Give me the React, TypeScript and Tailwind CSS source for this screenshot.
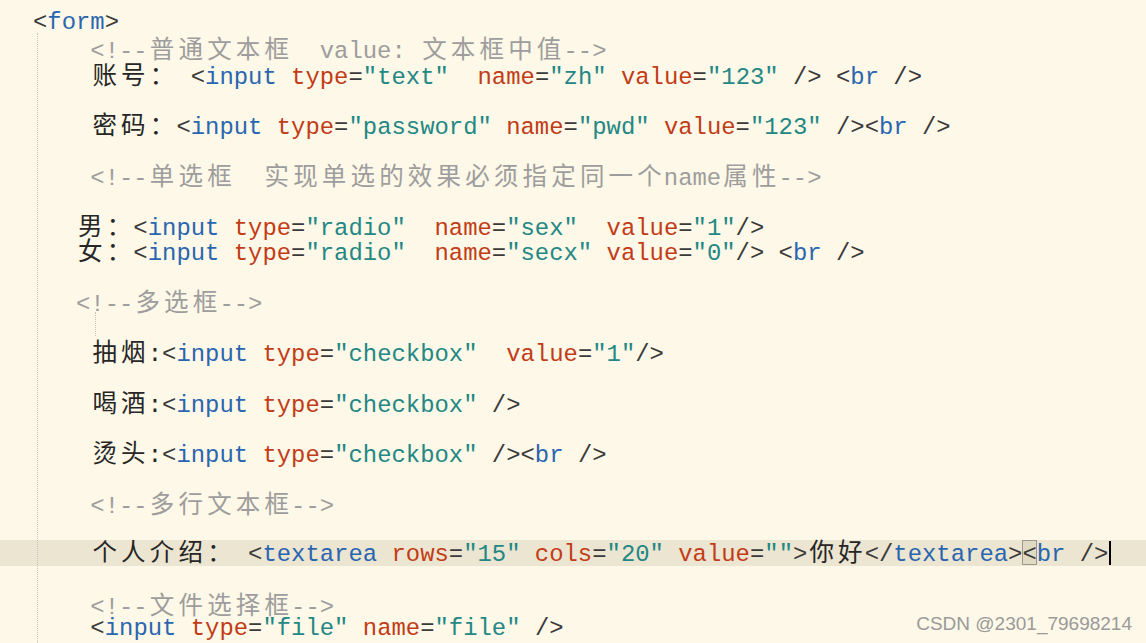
import React from "react";

type Seg = [string, string];

const D = "text-[#3a3a3a]";
const T = "text-[#2a66b0]";
const A = "text-[#c23c17]";
const V = "text-[#238784]";
const C = "text-[#9d9d9d]";
const X = "text-[#262626]";

function isWide(ch: string) {
  const c = ch.codePointAt(0) || 0;
  return c >= 0x2e80;
}

function renderText(s: string, key: string) {
  const out: React.ReactNode[] = [];
  let buf = "";
  let i = 0;
  for (const ch of s) {
    if (isWide(ch)) {
      if (buf) {
        out.push(<span key={key + "a" + i}>{buf}</span>);
        buf = "";
      }
      out.push(
        <span
          key={key + "w" + i}
          className="inline-block w-[28.68px] text-center font-['Noto_Sans_CJK_SC',sans-serif] text-[24.5px] leading-[25.25px]"
        >
          {ch}
        </span>
      );
    } else {
      buf += ch;
    }
    i++;
  }
  if (buf) out.push(<span key={key + "e"}>{buf}</span>);
  return out;
}

const attr = (name: string, val: string): Seg[] => [
  [A, name],
  [D, "="],
  [V, val],
];

const lines: Seg[][] = [
  [[D, "<"], [T, "form"], [D, ">"]],
  [[C, "    <!--普通文本框  value: 文本框中值-->"]],
  [
    [X, "    账号： "],
    [D, "<"],
    [T, "input"],
    [X, " "],
    ...attr("type", '"text"'),
    [X, "  "],
    ...attr("name", '"zh"'),
    [X, " "],
    ...attr("value", '"123"'),
    [D, " /> <"],
    [T, "br"],
    [D, " />"],
  ],
  [],
  [
    [X, "    密码："],
    [D, "<"],
    [T, "input"],
    [X, " "],
    ...attr("type", '"password"'),
    [X, " "],
    ...attr("name", '"pwd"'),
    [X, " "],
    ...attr("value", '"123"'),
    [D, " /><"],
    [T, "br"],
    [D, " />"],
  ],
  [],
  [[C, "    <!--单选框  实现单选的效果必须指定同一个name属性-->"]],
  [],
  [
    [X, "   男："],
    [D, "<"],
    [T, "input"],
    [X, " "],
    ...attr("type", '"radio"'),
    [X, "  "],
    ...attr("name", '"sex"'),
    [X, "  "],
    ...attr("value", '"1"'),
    [D, "/>"],
  ],
  [
    [X, "   女："],
    [D, "<"],
    [T, "input"],
    [X, " "],
    ...attr("type", '"radio"'),
    [X, "  "],
    ...attr("name", '"secx"'),
    [X, " "],
    ...attr("value", '"0"'),
    [D, "/> <"],
    [T, "br"],
    [D, " />"],
  ],
  [],
  [[C, "   <!--多选框-->"]],
  [],
  [
    [X, "    抽烟:"],
    [D, "<"],
    [T, "input"],
    [X, " "],
    ...attr("type", '"checkbox"'),
    [X, "  "],
    ...attr("value", '"1"'),
    [D, "/>"],
  ],
  [],
  [
    [X, "    喝酒:"],
    [D, "<"],
    [T, "input"],
    [X, " "],
    ...attr("type", '"checkbox"'),
    [D, " />"],
  ],
  [],
  [
    [X, "    烫头:"],
    [D, "<"],
    [T, "input"],
    [X, " "],
    ...attr("type", '"checkbox"'),
    [D, " /><"],
    [T, "br"],
    [D, " />"],
  ],
  [],
  [[C, "    <!--多行文本框-->"]],
  [],
  [], // active line
  [],
  [[C, "    <!--文件选择框-->"]],
  [
    [X, "    "],
    [D, "<"],
    [T, "input"],
    [X, " "],
    ...attr("type", '"file"'),
    [X, " "],
    ...attr("name", '"file"'),
    [D, " />"],
  ],
];

function Line({ segs, idx }: { segs: Seg[]; idx: number }) {
  return (
    <div className="h-[25.25px] leading-[25.25px] whitespace-pre pl-[33px]">
      {segs.map(([cls, txt], j) => (
        <span key={j} className={cls}>
          {renderText(txt, `${idx}-${j}`)}
        </span>
      ))}
    </div>
  );
}

function ActiveLine() {
  const segs: Seg[] = [
    [X, "    个人介绍： "],
    [D, "<"],
    [T, "textarea"],
    [X, " "],
    ...attr("rows", '"15"'),
    [X, " "],
    ...attr("cols", '"20"'),
    [X, " "],
    ...attr("value", '""'),
    [D, ">"],
    [X, "你好"],
    [D, "</"],
    [T, "textarea"],
    [D, ">"],
  ];
  return (
    <div className="h-[25.25px] leading-[25.25px] whitespace-pre pl-[33px] bg-[#ebe5d1] flex items-center">
      <span>
        {segs.map(([cls, txt], j) => (
          <span key={j} className={cls}>
            {renderText(txt, `act-${j}`)}
          </span>
        ))}
        <span className="relative">
          <span className="absolute left-0 top-[-1px] w-[14.34px] h-[25px] border border-[#9a9a8e] bg-[#e0dac4]" />
          <span className={`relative ${D}`}>{"<"}</span>
        </span>
        <span className={T}>br</span>
        <span className={D}>{" />"}</span>
      </span>
      <span className="inline-block w-[2px] h-[24px] bg-black ml-[1px]" />
    </div>
  );
}

export default function App() {
  return (
    <div className="relative w-[1146px] h-[643px] overflow-hidden bg-[#fdf8e7] font-['Liberation_Mono','Noto_Sans_CJK_SC',monospace] text-[23.9px]">
      <div className="absolute left-[37px] top-[33px] bottom-0 border-l border-dotted border-[#c9c5b5]" />
      <div className="absolute left-[95px] top-[312px] h-[24px] border-l border-dotted border-[#c9c5b5]" />
      <div className="pt-[10px]">
        {lines.map((segs, i) =>
          i === 21 ? <ActiveLine key={i} /> : <Line key={i} segs={segs} idx={i} />
        )}
      </div>
      <div className="absolute right-[14px] bottom-[5px] font-['Liberation_Sans',Arial,sans-serif] text-[19px] text-[#9a9a9a]">
        CSDN @2301_79698214
      </div>
    </div>
  );
}
